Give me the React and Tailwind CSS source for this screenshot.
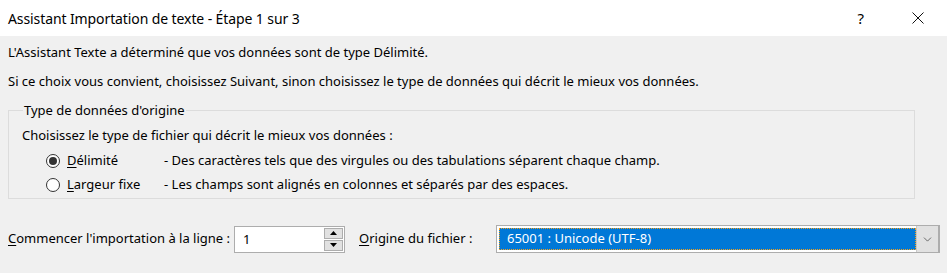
import { ChevronDown } from "lucide-react";

function Radio({ checked }) {
  return (
    <span className="flex h-[14px] w-[14px] items-center justify-center rounded-full border border-[#333333] bg-white">
      {checked && <span className="h-[8px] w-[8px] rounded-full bg-[#333333]" />}
    </span>
  );
}

function Option({ checked, first, rest, desc }) {
  return (
    <div className="flex h-[24px] items-center">
      <Radio checked={checked} />
      <span className="ml-[7px] w-[97px]">
        <span className="underline underline-offset-2">{first}</span>
        {rest}
      </span>
      <span>{desc}</span>
    </div>
  );
}

export default function App() {
  return (
    <div
      className="h-[273px] w-[947px] overflow-hidden bg-[#f0f0f0] text-[13px] text-black"
      style={{ fontFamily: '"Noto Sans", sans-serif' }}
    >
      <div className="flex h-[36px] items-center bg-white pl-[8px]">
        <span className="text-[14px] tracking-[-0.1px]">Assistant Importation de texte - Étape 1 sur 3</span>
        <span className="ml-auto mr-[48px] text-[15px]">?</span>
        <svg width="12" height="12" viewBox="0 0 12 12" className="mr-[23px]">
          <path d="M0.5 0.5 L11.5 11.5 M11.5 0.5 L0.5 11.5" stroke="#111" strokeWidth="1" />
        </svg>
      </div>

      <div className="pl-[8px]">
        <p className="mt-[7px] h-[18px] leading-[18px]">
          L'Assistant Texte a déterminé que vos données sont de type Délimité.
        </p>
        <p className="mt-[11px] h-[18px] leading-[18px]">
          Si ce choix vous convient, choisissez Suivant, sinon choisissez le type de données qui décrit le mieux vos données.
        </p>

        <fieldset className="mt-[12px] mr-[32px] h-[97px] border border-[#dcdcdc] pl-[13px]">
          <legend className="ml-[1px] px-[1px] leading-[16px]">Type de données d'origine</legend>
          <p className="mt-[8px] h-[18px] leading-[18px]">
            Choisissez le type de fichier qui décrit le mieux vos données :
          </p>
          <div className="mt-[5px] pl-[24px]">
            <Option
              checked
              first="D"
              rest="élimité"
              desc="- Des caractères tels que des virgules ou des tabulations séparent chaque champ."
            />
            <Option
              first="L"
              rest="argeur fixe"
              desc="- Les champs sont alignés en colonnes et séparés par des espaces."
            />
          </div>
        </fieldset>

        <div className="mt-[26px] flex items-center">
          <span className="w-[226px] shrink-0">
            <span className="underline underline-offset-2">C</span>ommencer l'importation à la ligne :
          </span>
          <div className="flex h-[27px] w-[111px] shrink-0 items-stretch border border-[#adadad] bg-white">
            <span className="flex-1 pl-[8px] leading-[24px]">1</span>
            <div className="my-[1px] mr-[1px] flex w-[19px] flex-col gap-[1px]">
              <div className="flex flex-1 items-center justify-center border border-[#adadad] bg-[#e1e1e1]">
                <svg width="7" height="4" viewBox="0 0 7 4"><path d="M3.5 0 L7 4 L0 4 Z" fill="#000" /></svg>
              </div>
              <div className="flex flex-1 items-center justify-center border border-[#adadad] bg-[#e1e1e1]">
                <svg width="7" height="4" viewBox="0 0 7 4"><path d="M0 0 L7 0 L3.5 4 Z" fill="#000" /></svg>
              </div>
            </div>
          </div>
          <span className="ml-[14px] w-[137px] shrink-0">
            <span className="underline underline-offset-2">O</span>rigine du fichier :
          </span>
          <div className="flex h-[28px] w-[444px] shrink-0 border border-[#adadad] border-r-2 bg-white py-[2px] pl-[2px]">
            <div className="flex flex-1 items-center border border-dotted border-[#f7a11a] bg-[#0078d7] pl-[7px] text-white">
              65001 : Unicode (UTF-8)
            </div>
            <div className="-my-[2px] flex w-[22px] items-center justify-center border-l border-[#c8c8c8] bg-[#e1e1e1]">
              <ChevronDown size={13} strokeWidth={1.25} color="#333" />
            </div>
          </div>
        </div>
      </div>
    </div>
  );
}
